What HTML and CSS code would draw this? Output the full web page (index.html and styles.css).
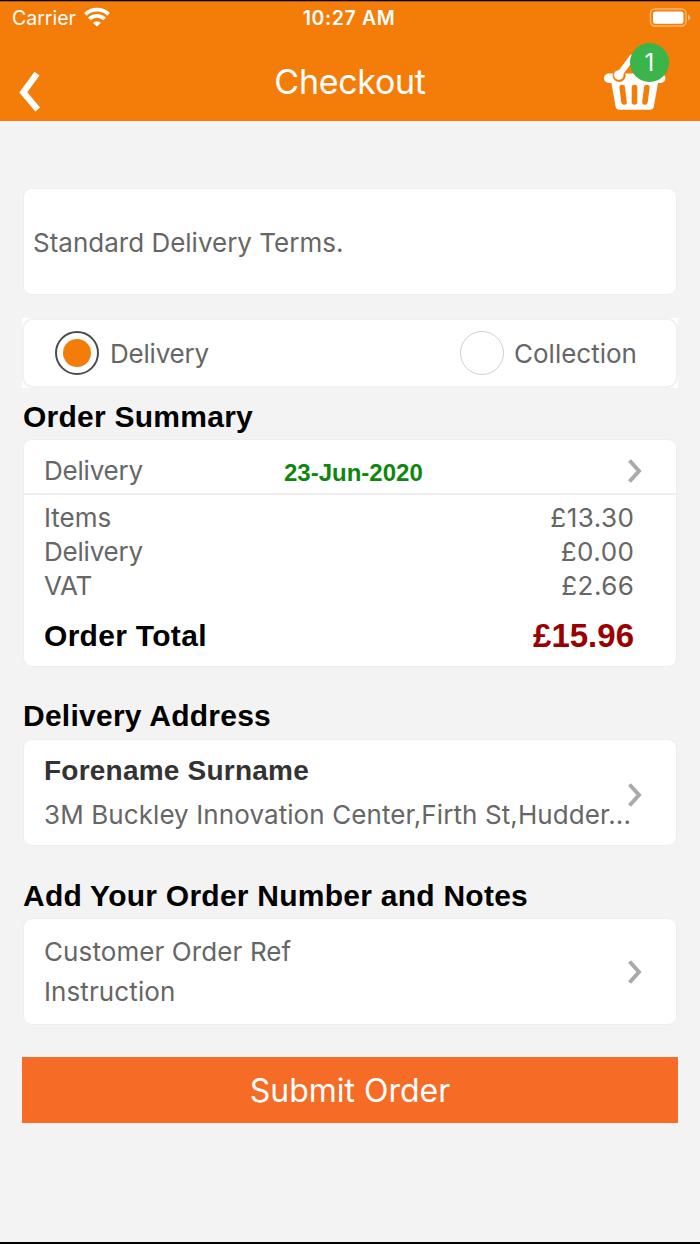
FILE: index.html
```html
<!DOCTYPE html>
<html lang="en">
<head>
<meta charset="utf-8">
<title>Checkout</title>
<link rel="stylesheet" href="styles.css">
</head>
<body>
<div class="screen">
  <header class="header">
    <div class="status">
      <div class="carrier"><span class="carrier-name">Carrier</span>
        <svg class="wifi" width="26" height="20" viewBox="0 0 26 20"><g fill="none" stroke="#fff" stroke-width="3.800"><path d="M1.400 7.300a16.600 16.600 0 0 1 23.200 0"/><path d="M5.400 12a11 11 0 0 1 15.200 0"/></g><path d="M9 15.800a5.900 5.900 0 0 1 8 0L13 19.600z" fill="#fff"/></svg>
      </div>
      <span class="time">10:27 AM</span>
      <svg class="battery" width="42" height="20" viewBox="0 0 42 20"><rect x="1.500" y="1" width="35.500" height="17" rx="4.500" fill="none" stroke="#fff" stroke-opacity=".45" stroke-width="1.400"/><rect x="4" y="3.400" width="30.500" height="12.400" rx="2.400" fill="#fff"/><path d="M39 6.800c3 1 3 4.600 0 5.600z" fill="#fff" fill-opacity=".5"/></svg>
    </div>
    <div class="nav">
      <svg class="back" width="26" height="42" viewBox="0 0 26 42"><path d="M21 2.700 7.300 21.300l14.400 17.200" fill="none" stroke="#fff" stroke-width="6.200"/></svg>
      <h1 class="title"><span>Checkout</span></h1>
      <div class="basket">
        <svg width="64" height="60" viewBox="0 0 64 60"><path d="M4.700 23.500h52a4.600 4.600 0 0 1 0 9.500l-2.700 0-4.200 23.500a4 4 0 0 1-4 3.200H15.600a4 4 0 0 1-4-3.200L7.400 33h-2.700a4.600 4.600 0 0 1 0-9.500z" fill="#fff"/><circle cx="15.200" cy="25.500" r="6.500" fill="#f47d09"/><circle cx="14.800" cy="25" r="4.800" fill="#fff"/><path d="M28 7.500 15 25" stroke="#fff" stroke-width="5.800" stroke-linecap="round"/><path d="m18.200 37.500 1.800 14.500M30.500 37.500V52M42.800 37.500 41 52" stroke="#f47d09" stroke-width="5.600" stroke-linecap="round"/></svg>
        <span class="badge">1</span>
      </div>
    </div>
  </header>

  <main class="content">
    <section class="card terms"><span>Standard Delivery Terms.</span></section>

    <section class="options">
      <div class="options-inner">
        <div class="option"><span class="radio checked"></span><span class="tight">Delivery</span></div>
        <div class="option second"><span class="radio"></span><span>Collection</span></div>
      </div>
    </section>

    <h2 class="heading first"><span>Order Summary</span></h2>
    <section class="card summary">
      <div class="date-row">
        <span class="tight">Delivery</span>
        <span class="date">23-Jun-2020</span>
        <svg class="chevron" width="16" height="26" viewBox="0 0 16 26"><path d="m2.500 2.500 9.500 10.500-9.500 10.500" fill="none" stroke="#aaa" stroke-width="4"/></svg>
      </div>
      <div class="line items"><span>Items</span><span class="amount">£13.30</span></div>
      <div class="line"><span class="tight">Delivery</span><span class="amount">£0.00</span></div>
      <div class="line vat"><span class="tight">VAT</span><span class="amount">£2.66</span></div>
      <div class="total"><span class="total-label">Order Total</span><span class="total-amount">£15.96</span></div>
    </section>

    <h2 class="heading address-heading"><span>Delivery Address</span></h2>
    <section class="card address">
      <div class="lines">
        <div class="name"><span>Forename Surname</span></div>
        <div class="street"><span>3M Buckley Innovation Center,Firth St,Hudder...</span></div>
      </div>
      <svg class="chevron" width="16" height="26" viewBox="0 0 16 26"><path d="m2.500 2.500 9.500 10.500-9.500 10.500" fill="none" stroke="#aaa" stroke-width="4"/></svg>
    </section>

    <h2 class="heading notes-heading"><span>Add Your Order Number and Notes</span></h2>
    <section class="card notes">
      <div class="lines">
        <div class="ref"><span>Customer Order Ref</span></div>
        <div class="instruction"><span>Instruction</span></div>
      </div>
      <svg class="chevron" width="16" height="26" viewBox="0 0 16 26"><path d="m2.500 2.500 9.500 10.500-9.500 10.500" fill="none" stroke="#aaa" stroke-width="4"/></svg>
    </section>

    <button class="submit"><span>Submit Order</span></button>
  </main>
</div>
</body>
</html>
```

FILE: styles.css
```css
* { box-sizing: border-box; }
body { margin: 0; }
svg { display: block; flex: none; }
.screen {
  width: 700px;
  height: 1244px;
  display: flex;
  flex-direction: column;
  background: #f3f3f3;
  border-top: 1px solid #000;
  border-bottom: 2px solid #000;
  font-family: Inter, "Liberation Sans", sans-serif;
  font-size: 26px;
  color: #666;
  white-space: nowrap;
  overflow: hidden;
}
.tight { letter-spacing: -0.2px; }

/* Header */
.header { height: 120px; background: #f47d09; color: #fff; border-top: 1px solid #b25a06; }
.status { height: 32px; display: grid; grid-template-columns: 1fr auto 1fr; align-items: center; padding: 0 9px 0 12px; font-size: 19.5px; }
.carrier { display: flex; align-items: center; gap: 8px; }
.wifi { margin-top: -2px; }
.time { font-weight: 600; font-size: 19.5px; letter-spacing: 0.6px; margin-right: 5px; }
.battery { justify-self: end; }
.nav { height: 87px; display: grid; grid-template-columns: 1fr auto 1fr; padding: 0 32px 0 16px; }
.back { margin-top: 37px; }
.title { margin: 0; padding-left: 16px; font-size: 34px; font-weight: 400; line-height: 95px; letter-spacing: -0.3px; }
.basket { position: relative; justify-self: end; margin-top: 16px; width: 64px; height: 60px; }
.badge { position: absolute; left: 26px; top: -7px; width: 39px; height: 39px; border-radius: 50%; background: #3bb44a; font-size: 24px; line-height: 39px; text-align: center; }

/* Content */
.content { display: flex; flex-direction: column; padding: 67px 22px 0; }
.card { margin: 0 1px; background: #fff; border: 1px solid #eee; border-radius: 9px; }
.terms { height: 107px; padding: 0 9px; line-height: 108px; }
.options { height: 70px; margin-top: 23px; background: #fff; }
.options-inner { height: 70px; display: flex; border: 2px solid #f1f1f1; border-radius: 11px; padding-left: 31px; }
.option { display: flex; align-items: center; gap: 11px; width: 405px; line-height: 32px; }
.option span:last-child { padding-top: 2px; }
.radio { width: 44px; height: 44px; border: 1px solid #d6d0c4; border-radius: 50%; }
.radio.checked { border: 2px solid #4c4c4c; padding: 6px; background: #f47d09 content-box; }
.option.second { width: auto; gap: 10px; }
.heading { margin: 0; font: bold 30px "Liberation Sans", sans-serif; line-height: 34px; color: #000; letter-spacing: 0.25px; padding-left: 1px; }
.first { margin-top: 12px; }
.summary { height: 228px; margin-top: 5px; }
.date-row { height: 55px; display: grid; grid-template-columns: 240px 1fr 16px; padding: 7px 33px 0 20px; border-bottom: 2px solid #eee; line-height: 48px; }
.date { font: bold 24px "Liberation Sans", sans-serif; line-height: 51px; color: #0f870f; }
.date-row .chevron { margin-top: 11px; }
.line { display: flex; justify-content: space-between; line-height: 34px; padding: 0 42px 0 20px; }
.items { margin-top: 6px; }
.amount { letter-spacing: 0.5px; margin-right: -0.500px; }
.total { display: flex; justify-content: space-between; line-height: 40px; margin-top: 13px; padding: 0 42px 0 20px; font-family: "Liberation Sans", sans-serif; font-weight: bold; color: #000; }
.total-label { font-size: 30px; letter-spacing: 0.3px; }
.total-amount { font-size: 33px; color: #990000; }
.address-heading { margin-top: 32px; }
.address, .notes { height: 107px; display: flex; align-items: center; justify-content: space-between; padding: 0 33px 0 20px; }
.address { margin-top: 6px; }
.address .lines, .notes .lines { width: 583px; flex: none; margin-right: -20px; }
.name { font: bold 28px "Liberation Sans", sans-serif; line-height: 44px; color: #333; letter-spacing: 0.22px; }
.street { line-height: 44px; letter-spacing: 0.09px; }
.notes-heading { margin-top: 33px; }
.notes { margin-top: 5px; }
.ref, .instruction { line-height: 40px; letter-spacing: 0.1px; }
.notes .lines { padding-top: 1px; }
.address .chevron { margin-top: 4px; }
.submit { height: 66px; margin-top: 32px; padding: 0; border: 0; background: #f66b25; color: #fff; font: 32px Inter, sans-serif; line-height: 67px; }
```
